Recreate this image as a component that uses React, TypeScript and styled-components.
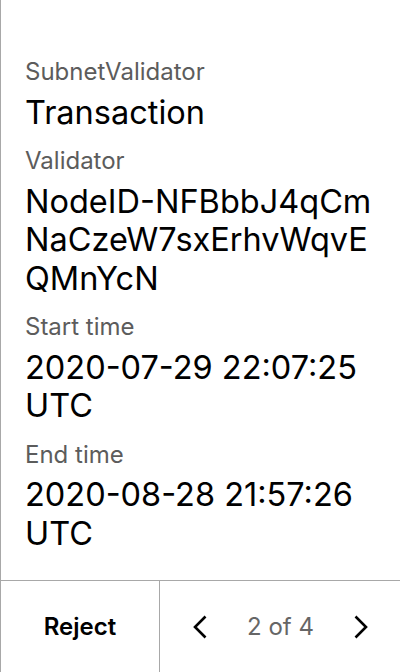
import React from "react";
import styled, { createGlobalStyle } from "styled-components";

const Global = createGlobalStyle`
  html, body { margin: 0; padding: 0; background: #fff; }
  body { font-family: Inter, "Noto Sans", sans-serif; -webkit-font-smoothing: antialiased; }
  * { box-sizing: border-box; }
`;

const Screen = styled.div`
  width: 400px;
  height: 672px;
  display: flex;
  flex-direction: column;
  border-left: 1px solid #a8a8a8;
  background: #fff;
`;

const Content = styled.div`
  flex: 1;
  padding: 57px 16px 0 24px;
  display: flex;
  flex-direction: column;
  gap: 14px;
`;

const Field = styled.div`
  display: flex;
  flex-direction: column;
  gap: 7.5px;
`;

const Label = styled.div`
  font-size: 24px;
  line-height: 29px;
  color: #5c5c5c;
`;

const Value = styled.div`
  font-size: 32.5px;
  line-height: 38.5px;
  color: #000;
  word-break: break-all;
`;

const Footer = styled.div`
  height: 92px;
  border-top: 1px solid #a8a8a8;
  display: flex;
`;

const RejectButton = styled.button`
  width: 159px;
  border: none;
  border-right: 1px solid #a8a8a8;
  background: none;
  font-family: Inter, sans-serif;
  font-size: 24px;
  font-weight: 600;
  color: #000;
  padding: 0;
`;

const Pager = styled.div`
  flex: 1;
  display: flex;
  align-items: center;
  justify-content: space-between;
  padding: 0 32px 0 33px;
`;

const Arrow = styled.button`
  border: none;
  background: none;
  padding: 0;
  width: 14px;
  height: 24px;
  display: flex;
`;

const PageText = styled.span`
  font-size: 24px;
  color: #666;
`;

const Chevron = ({ dir }: { dir: "left" | "right" }) => (
  <svg width="14" height="24" viewBox="0 0 14 24" fill="none">
    <path
      d={dir === "left" ? "M12.5 1.5 L2 12 L12.5 22.5" : "M1.5 1.5 L12 12 L1.5 22.5"}
      stroke="#000"
      strokeWidth="2.6"
      strokeLinecap="butt"
      strokeLinejoin="miter"
    />
  </svg>
);

const fields = [
  { label: "SubnetValidator", value: "Transaction" },
  { label: "Validator", value: "NodeID-NFBbbJ4qCmNaCzeW7sxErhvWqvEQMnYcN" },
  { label: "Start time", value: "2020-07-29 22:07:25 UTC" },
  { label: "End time", value: "2020-08-28 21:57:26 UTC" },
];

export default function App() {
  return (
    <>
      <Global />
      <Screen>
        <Content>
          {fields.map((f) => (
            <Field key={f.label}>
              <Label>{f.label}</Label>
              <Value>{f.value}</Value>
            </Field>
          ))}
        </Content>
        <Footer>
          <RejectButton>Reject</RejectButton>
          <Pager>
            <Arrow aria-label="Previous"><Chevron dir="left" /></Arrow>
            <PageText>2 of 4</PageText>
            <Arrow aria-label="Next"><Chevron dir="right" /></Arrow>
          </Pager>
        </Footer>
      </Screen>
    </>
  );
}
